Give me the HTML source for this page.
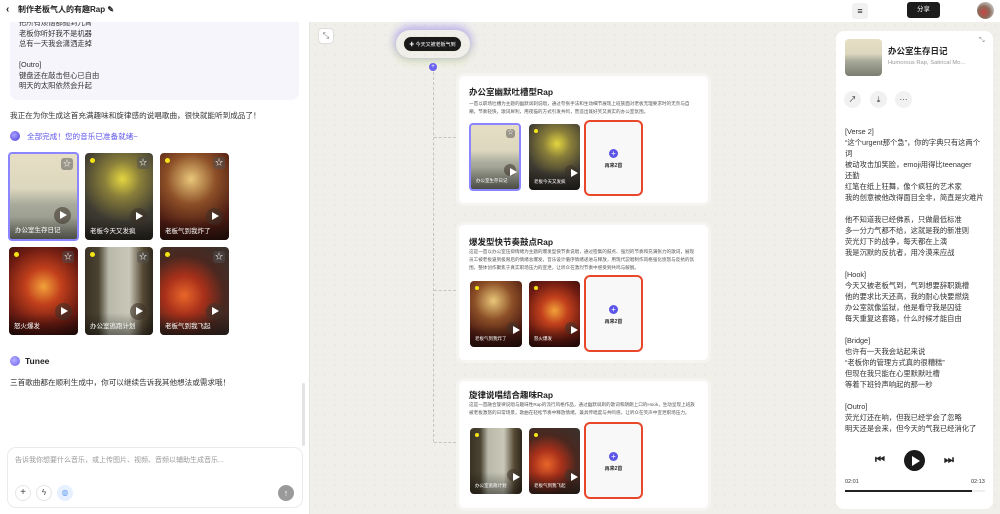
<!DOCTYPE html>
<html><head><meta charset="utf-8"><style>
*{margin:0;padding:0;box-sizing:border-box}
body{width:1000px;height:514px;overflow:hidden;font-family:"Liberation Sans","Noto Sans CJK SC",sans-serif;background:#f1efea;background-image:radial-gradient(circle,#dcd9d2 0.6px,transparent 0.8px);background-size:10px 10px;position:relative;color:#222}
.abs{position:absolute}
#left{left:0;top:0;width:310px;height:514px;background:#fff;border-right:1px solid #e6e4e0}
#top{left:310px;top:0;width:690px;height:22px;background:#fff}
.card{position:absolute;border-radius:4px;overflow:hidden}
.card .lbl{position:absolute;left:5px;bottom:5px;color:#fff;font-size:6.5px}
.card .pl{position:absolute;right:6px;bottom:15px;width:17px;height:17px;border-radius:50%;background:rgba(60,50,40,.55)}
.card .pl:after{content:"";position:absolute;left:6px;top:4px;border-left:7px solid #fff;border-top:4.5px solid transparent;border-bottom:4.5px solid transparent}
.card .st{position:absolute;right:4px;top:4px;width:12px;height:12px;border-radius:3px;background:rgba(80,80,80,.5);color:#fff;font-size:8px;line-height:12px;text-align:center}
.card .dot{position:absolute;left:5px;top:5px;width:5px;height:5px;border-radius:50%;background:#f5e313}
.card .sh{position:absolute;left:0;right:0;bottom:0;height:22px;background:linear-gradient(transparent,rgba(0,0,0,.45))}
.ly{font-size:7.3px;line-height:11px;color:#333}
.node{position:absolute;background:#fff;border-radius:8px;border:3px solid #f5f4f1;box-sizing:content-box}
.node h3{position:absolute;left:10px;font-size:8.5px;font-weight:bold;color:#222}
.node p{position:absolute;left:10px;right:10px;font-size:4.6px;line-height:8px;color:#555}
.add{position:absolute;border:2px solid #e8472a;border-radius:6px;background:#f8f8f8}
.add i{position:absolute;left:50%;top:50%;width:9px;height:9px;margin:-9px 0 0 -4.5px;border-radius:50%;background:#5b54e8;color:#fff;font-style:normal;font-size:8px;line-height:9px;text-align:center}
.add b{position:absolute;left:0;right:0;top:50%;margin-top:4px;text-align:center;font-size:5px;color:#333}
.ic{position:absolute;width:17px;height:17px;border-radius:50%;background:#f1f1f1;font-size:8px;line-height:17px;text-align:center;color:#333}
</style></head><body>
<div id="left" class="abs">
  <div class="abs" style="left:10px;top:0;width:289px;height:100px;background:#f5f5fb;border-radius:0 0 8px 8px"></div>
  <div class="abs" style="left:19px;top:18px;font-size:7.3px;line-height:10.5px;color:#333">把所有烦恼都抛到九霄<br>老板你听好我不是机器<br>总有一天我会潇洒走掉<br><br>[Outro]<br>键盘还在敲击但心已自由<br>明天的太阳依然会升起</div>
  <div class="abs" style="left:0;top:0;width:310px;height:22px;background:#fff"></div>
  <div class="abs" style="left:6px;top:4px;font-size:10px;font-weight:bold">‹</div>
  <div class="abs" style="left:18px;top:4px;font-size:8px;font-weight:bold">制作老板气人的有趣Rap ✎</div>
  <div class="abs" style="left:10px;top:110px;font-size:7.6px;color:#333">我正在为你生成这首充满趣味和旋律感的说唱歌曲，很快就能听到成品了！</div>
  <div class="abs" style="left:10px;top:131px;width:10px;height:10px;border-radius:50%;background:radial-gradient(circle at 40% 40%,#a9a4ff,#4b3ad8)"></div>
  <div class="abs" style="left:27px;top:131px;font-size:7.6px;color:#5b54e8">全部完成！您的音乐已准备就绪~</div>

  <div class="card" style="left:8px;top:152px;width:71px;height:89px;border:2px solid #8b86ff;background:linear-gradient(#e6dfc4 0,#ddd7bf 40%,#a7a99a 60%,#8a8d80 100%)"><div class="sh"></div><div class="st">☆</div><div class="pl"></div><div class="lbl">办公室生存日记</div></div>
  <div class="card" style="left:85px;top:153px;width:68px;height:87px;background:radial-gradient(circle at 55% 30%,#e4d640 0,#8a7f3a 25%,#3d3a32 60%,#2a2620 100%)"><div class="sh"></div><div class="dot"></div><div class="st">☆</div><div class="pl"></div><div class="lbl">老板今天又发疯</div></div>
  <div class="card" style="left:160px;top:153px;width:69px;height:87px;background:radial-gradient(circle at 45% 30%,#e9c77a 0,#8c4f27 35%,#4a1a12 70%,#2b120c 100%)"><div class="sh"></div><div class="dot"></div><div class="st">☆</div><div class="pl"></div><div class="lbl">老板气到我炸了</div></div>
  <div class="card" style="left:9px;top:247px;width:69px;height:88px;background:radial-gradient(circle at 50% 45%,#f2a23a 0,#c2401c 30%,#6e1c12 65%,#2b0d0b 100%)"><div class="sh"></div><div class="dot"></div><div class="st">☆</div><div class="pl"></div><div class="lbl">怒火爆发</div></div>
  <div class="card" style="left:85px;top:247px;width:68px;height:88px;background:linear-gradient(90deg,#3a3224 0,#4a4332 20%,#b9b9aa 35%,#c9c8b8 65%,#574a35 85%,#2f281d 100%)"><div class="sh"></div><div class="dot"></div><div class="st">☆</div><div class="pl"></div><div class="lbl">办公室逃跑计划</div></div>
  <div class="card" style="left:160px;top:247px;width:69px;height:88px;background:radial-gradient(circle at 35% 55%,#e8662a 0,#a8301a 30%,#4a2820 60%,#38322e 100%)"><div class="sh"></div><div class="dot"></div><div class="st">☆</div><div class="pl"></div><div class="lbl">老板气到我飞起</div></div>

  <div class="abs" style="left:10px;top:356px;width:10px;height:10px;border-radius:50%;background:radial-gradient(circle at 40% 40%,#b5b1ff,#6a5cf0)"></div>
  <div class="abs" style="left:25px;top:356px;font-size:8.5px;font-weight:bold">Tunee</div>
  <div class="abs" style="left:10px;top:377px;font-size:7.6px;color:#333">三首歌曲都在顺利生成中，你可以继续告诉我其他想法或需求哦！</div>
  <div class="abs" style="left:302px;top:383px;width:3px;height:63px;background:#e3e3e3;border-radius:2px"></div>
  <div class="abs" style="left:7px;top:447px;width:296px;height:61px;border:1px solid #ebebeb;border-radius:9px;background:#fff"></div>
  <div class="abs" style="left:15px;top:455px;font-size:7px;color:#999">告诉我你想要什么音乐，或上传图片、视频、音频以辅助生成音乐...</div>
  <div class="abs" style="left:15px;top:485px;width:16px;height:16px;border:1px solid #e6e6e6;border-radius:50%;font-size:10px;line-height:14px;text-align:center;color:#444">+</div>
  <div class="abs" style="left:36px;top:485px;width:16px;height:16px;border:1px solid #e6e6e6;border-radius:50%;font-size:8px;line-height:14px;text-align:center;color:#444">ϟ</div>
  <div class="abs" style="left:57px;top:485px;width:16px;height:16px;background:#e6f0ff;border-radius:50%;font-size:8px;line-height:16px;text-align:center;color:#6aa0ee">◍</div>
  <div class="abs" style="left:278px;top:485px;width:16px;height:16px;background:#9a9a9a;border-radius:50%;font-size:9px;line-height:16px;text-align:center;color:#fff">↑</div>
</div>

<div id="top" class="abs">
  <div class="abs" style="left:542px;top:3px;width:16px;height:16px;border-radius:3px;background:#f1f1f1;font-size:9px;line-height:16px;text-align:center">≡</div>
  <div class="abs" style="left:597px;top:2px;width:33px;height:16px;border-radius:3px;background:#1c1c1c;color:#fff;font-size:6.5px;line-height:16px;text-align:center">分享</div>
  <div class="abs" style="left:667px;top:2px;width:17px;height:17px;border-radius:50%;background:radial-gradient(circle at 40% 60%,#c44 0,#8a6a5a 40%,#ccc 80%)"></div>
</div>

<!-- canvas -->
<div class="abs" style="left:318px;top:28px;width:16px;height:16px;border-radius:4px;background:#fff;border:1px solid #ddd;font-size:8px;line-height:14px;text-align:center;color:#666">⤡</div>
<div class="abs" style="left:396px;top:30px;width:74px;height:28px;border-radius:14px;box-shadow:0 -2px 8px 2px rgba(130,110,255,.45),0 3px 8px 1px rgba(200,230,120,.45)"></div>
<div class="abs" style="left:403px;top:36px;width:59px;height:16px;border-radius:8px;background:#1a1a1a;color:#fff;font-size:5px;line-height:16px;text-align:center;border:1px solid #e9ecd8">✚ 今天又被老板气到</div>
<div class="abs" style="left:429px;top:63px;width:8px;height:8px;border-radius:50%;background:#6b63f0;color:#fff;font-size:6px;line-height:8px;text-align:center">+</div>
<div class="abs" style="left:433px;top:72px;height:370px;border-left:1px dashed #c9c6c0"></div>
<div class="abs" style="left:434px;top:137px;width:22px;border-top:1px dashed #c9c6c0"></div>
<div class="abs" style="left:434px;top:290px;width:22px;border-top:1px dashed #c9c6c0"></div>
<div class="abs" style="left:434px;top:442px;width:22px;border-top:1px dashed #c9c6c0"></div>

<div class="node" style="left:456px;top:73px;width:249px;height:127px">
  <h3 style="top:10px">办公室幽默吐槽型Rap</h3>
  <p style="top:24px">一首以职场吐槽为主题的幽默讽刺说唱，通过夸张手法和生动细节展现上班族面对老板无理要求时的无奈与自嘲，节奏轻快，歌词犀利，用夜猫的方式引发共鸣，营造出既好笑又真实的办公室氛围。</p>
  <div class="card" style="left:10px;top:47px;width:52px;height:68px;border:2px solid #8b86ff;background:linear-gradient(#e6dfc4 0,#ddd7bf 40%,#a7a99a 60%,#8a8d80 100%)"><div class="sh"></div><div class="st" style="width:9px;height:9px;font-size:6px;line-height:9px">☆</div><div class="pl" style="width:12px;height:12px;right:3px;bottom:13px"></div><div class="lbl" style="font-size:4.5px">办公室生存日记</div></div>
  <div class="card" style="left:70px;top:48px;width:51px;height:66px;background:radial-gradient(circle at 55% 30%,#e4d640 0,#8a7f3a 25%,#3d3a32 60%,#2a2620 100%)"><div class="sh"></div><div class="dot" style="width:4px;height:4px"></div><div class="pl" style="width:12px;height:12px;right:3px;bottom:13px"></div><div class="lbl" style="font-size:4.5px">老板今天又发疯</div></div>
  <div class="add" style="left:125px;top:44px;width:59px;height:76px"><i>+</i><b>再来2首</b></div>
</div>
<div class="node" style="left:456px;top:222px;width:249px;height:135px">
  <h3 style="top:11px">爆发型快节奏鼓点Rap</h3>
  <p style="top:23px">这是一首以办公室压抑情绪为主题的爆发型快节奏说唱，通过密集的鼓点、强烈的节奏和充满张力的歌词，展现员工被老板逼到极限后的情绪总爆发，音乐设计循序情绪递进与释放，用现代説唱制作风格强化愤怒与反抗的氛围，整体创作聚焦于真实职场压力的宣泄，让听众在激烈节奏中感受到共鸣与解脱。</p>
  <div class="card" style="left:11px;top:56px;width:52px;height:66px;background:radial-gradient(circle at 45% 30%,#e9c77a 0,#8c4f27 35%,#4a1a12 70%,#2b120c 100%)"><div class="sh"></div><div class="dot" style="width:4px;height:4px"></div><div class="pl" style="width:12px;height:12px;right:3px;bottom:13px"></div><div class="lbl" style="font-size:4.5px">老板气到我炸了</div></div>
  <div class="card" style="left:70px;top:56px;width:51px;height:66px;background:radial-gradient(circle at 50% 45%,#f2a23a 0,#c2401c 30%,#6e1c12 65%,#2b0d0b 100%)"><div class="sh"></div><div class="dot" style="width:4px;height:4px"></div><div class="pl" style="width:12px;height:12px;right:3px;bottom:13px"></div><div class="lbl" style="font-size:4.5px">怒火爆发</div></div>
  <div class="add" style="left:125px;top:50px;width:59px;height:77px"><i>+</i><b>再来2首</b></div>
</div>
<div class="node" style="left:456px;top:378px;width:249px;height:127px">
  <h3 style="top:8px">旋律说唱结合趣味Rap</h3>
  <p style="top:20px">这是一首融合旋律说唱与趣味性Rap的流行风格作品，通过幽默讽刺的歌词和朗朗上口的Hook，生动呈现上班族被老板激怒的日常场景，歌曲在轻松节奏中释放情绪，兼具传唱度与共鸣感，让听众在笑声中宣泄职场压力。</p>
  <div class="card" style="left:11px;top:47px;width:52px;height:66px;background:linear-gradient(90deg,#3a3224 0,#4a4332 20%,#b9b9aa 35%,#c9c8b8 65%,#574a35 85%,#2f281d 100%)"><div class="sh"></div><div class="dot" style="width:4px;height:4px"></div><div class="pl" style="width:12px;height:12px;right:3px;bottom:13px"></div><div class="lbl" style="font-size:4.5px">办公室逃跑计划</div></div>
  <div class="card" style="left:70px;top:47px;width:51px;height:66px;background:radial-gradient(circle at 35% 55%,#e8662a 0,#a8301a 30%,#4a2820 60%,#38322e 100%)"><div class="sh"></div><div class="dot" style="width:4px;height:4px"></div><div class="pl" style="width:12px;height:12px;right:3px;bottom:13px"></div><div class="lbl" style="font-size:4.5px">老板气到我飞起</div></div>
  <div class="add" style="left:125px;top:41px;width:59px;height:77px"><i>+</i><b>再来2首</b></div>
</div>

<!-- right panel -->
<div class="abs" style="left:836px;top:31px;width:157px;height:478px;background:#fff;border-radius:8px">
  <div class="abs" style="left:9px;top:8px;width:37px;height:37px;border-radius:4px;background:linear-gradient(#e6dfc4 0,#ddd7bf 40%,#a7a99a 60%,#7a7d70 100%)"></div>
  <div class="abs" style="left:52px;top:14px;font-size:8.5px;font-weight:bold">办公室生存日记</div>
  <div class="abs" style="left:52px;top:29px;font-size:5.8px;color:#999">Humorous Rap, Satirical Mo...</div>
  <div class="abs" style="left:143px;top:6px;font-size:7px;color:#888">⤡</div>
  <div class="ic" style="left:8px;top:60px">↗</div>
  <div class="ic" style="left:34px;top:60px">⤓</div>
  <div class="ic" style="left:59px;top:60px">···</div>
  <div class="abs ly" style="left:9px;top:95px">[Verse 2]<br>“这个urgent那个急”，你的字典只有这两个<br>词<br>被动攻击加笑脸，emoji用得比teenager<br>还勤<br>红笔在纸上狂舞，像个疯狂的艺术家<br>我的创意被他改得面目全非，简直是灾难片<br><br>他不知道我已经佛系，只做最低标准<br>多一分力气都不给，这就是我的新准则<br>荧光灯下的战争，每天都在上演<br>我是沉默的反抗者，用冷漠来应战<br><br>[Hook]<br>今天又被老板气到，气到想要辞职跳槽<br>他的要求比天还高，我的耐心快要燃烧<br>办公室就像监狱，他是看守我是囚徒<br>每天重复这套路，什么时候才能自由<br><br>[Bridge]<br>也许有一天我会站起来说<br>“老板你的管理方式真的很糟糕”<br>但现在我只能在心里默默吐槽<br>等着下班铃声响起的那一秒<br><br>[Outro]<br>荧光灯还在响，但我已经学会了忽略<br>明天还是会来，但今天的气我已经消化了</div>
  <div class="abs" style="left:39px;top:423px;font-size:11px;font-weight:bold">⏮</div>
  <div class="abs" style="left:68px;top:419px;width:21px;height:21px;border-radius:50%;background:#1a1a1a"></div>
  <div class="abs" style="left:76px;top:425px;border-left:8px solid #fff;border-top:5px solid transparent;border-bottom:5px solid transparent"></div>
  <div class="abs" style="left:108px;top:423px;font-size:11px;font-weight:bold">⏭</div>
  <div class="abs" style="left:9px;top:448px;font-size:5.5px;color:#333">02:01</div>
  <div class="abs" style="left:135px;top:448px;font-size:5.5px;color:#333">02:13</div>
  <div class="abs" style="left:9px;top:459px;width:140px;height:2px;background:#eee"></div>
  <div class="abs" style="left:9px;top:459px;width:127px;height:2px;background:#222"></div>
</div>
</body></html>
